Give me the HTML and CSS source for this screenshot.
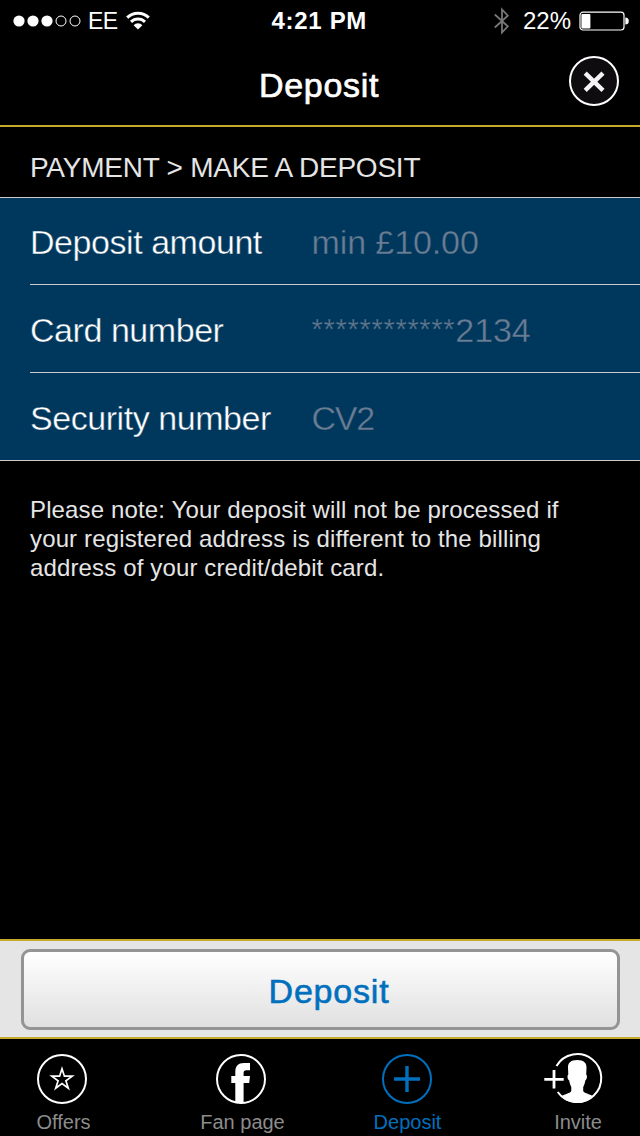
FILE: index.html
```html
<!DOCTYPE html>
<html lang="en">
<head>
  <meta charset="UTF-8">
  <meta name="viewport" content="width=640">
  <title>Deposit</title>
  <link rel="stylesheet" href="styles.css">
</head>
<body>
  <div class="app">
    <div class="status-bar">
      <div class="status-left">
        <svg class="signal" width="68" height="12" viewBox="0 0 68 12">
          <g fill="#fff">
            <circle cx="6" cy="6" r="5.6"/>
            <circle cx="20" cy="6" r="5.6"/>
            <circle cx="34" cy="6" r="5.6"/>
          </g>
          <g fill="none" stroke="#fff" stroke-width="1">
            <circle cx="48" cy="6" r="5"/>
            <circle cx="62" cy="6" r="5"/>
          </g>
        </svg>
        <span class="carrier">EE</span>
        <svg class="wifi" width="24" height="19" viewBox="0 0 24 19">
          <g fill="none" stroke="#fff" stroke-width="3">
            <path d="M1.2 6.6a15.3 15.3 0 0 1 21.6 0"/>
            <path d="M5 10.9a9.9 9.9 0 0 1 14 0"/>
          </g>
          <path d="M12 18.6l-4.4-4.4a6.2 6.2 0 0 1 8.8 0z" fill="#fff"/>
        </svg>
      </div>
      <span class="time">4:21 PM</span>
      <div class="status-right">
        <svg class="bluetooth" width="16" height="28" viewBox="0 0 16 28">
          <path d="M.8 7.5L13.8 19.3 8 25.5V2.5L13.8 8.7.8 20.5" fill="none" stroke="#777" stroke-width="1.8"/>
        </svg>
        <span class="percent">22%</span>
        <svg class="battery" width="50" height="20" viewBox="0 0 50 20">
          <rect x="1" y="1.2" width="44" height="17.8" rx="3" fill="none" stroke="#fff" stroke-width="1.2"/>
          <rect x="2.4" y="3" width="9" height="14.5" rx="1" fill="#fff"/>
          <path d="M46.3 6.5a3.4 3.4 0 0 1 0 7z" fill="#fff"/>
        </svg>
      </div>
    </div>

    <header class="header">
      <h1 class="title">Deposit</h1>
      <button class="close" aria-label="Close">
        <svg width="50" height="50" viewBox="0 0 50 50">
          <circle cx="25" cy="25" r="24" fill="#0e0c0f" stroke="#fff" stroke-width="2"/>
          <path d="M16.2 17.2L34 34.4M34 17.2L16.2 34.4" fill="none" stroke="#f4f4f4" stroke-width="4.4"/>
        </svg>
      </button>
    </header>

    <h2 class="breadcrumb">PAYMENT &gt; MAKE A DEPOSIT</h2>

    <div class="form">
      <div class="row">
        <span class="label">Deposit amount</span>
        <span class="value">min £10.00</span>
      </div>
      <div class="row">
        <span class="label">Card number</span>
        <span class="value"><span class="mask">************</span>2134</span>
      </div>
      <div class="row">
        <span class="label">Security number</span>
        <span class="value cv">CV2</span>
      </div>
    </div>

    <p class="note">Please note: Your deposit will not be processed if<br>your registered address is different to the billing<br>address of your credit/debit card.</p>

    <div class="action-bar">
      <button class="deposit-btn">Deposit</button>
    </div>

    <nav class="tabs">
      <a class="tab">
        <svg width="50" height="50" viewBox="0 0 50 50" fill="none" stroke="#fff">
          <circle cx="25" cy="25" r="24" stroke-width="2"/>
          <path d="M25 14.8l2.4 7.4h7.8l-6.3 4.6 2.4 7.4-6.3-4.6-6.3 4.6 2.4-7.4-6.3-4.6h7.8z" stroke-width="1.7"/>
        </svg>
        <span>Offers</span>
      </a>
      <a class="tab">
        <svg width="50" height="50" viewBox="0 0 50 50">
          <circle cx="25" cy="25" r="24" fill="none" stroke="#fff" stroke-width="2"/>
          <path d="M19.3 48.5V29h-4v-7h4v-4c0-6 3-9 8.5-9H34v7.2h-3.6c-2 0-2.8.9-2.8 2.8v3H34l-.8 7h-5.6v20z" fill="#fff"/>
        </svg>
        <span>Fan page</span>
      </a>
      <a class="tab active">
        <svg width="50" height="50" viewBox="0 0 50 50" fill="none" stroke="#0070be">
          <circle cx="25" cy="25" r="24" stroke-width="2"/>
          <path d="M12 25h26M25 12v26" stroke-width="3.4"/>
        </svg>
        <span>Deposit</span>
      </a>
      <a class="tab invite">
        <svg width="58" height="50" viewBox="0 0 58 50">
          <path d="M12.5 12A24 24 0 1 1 13.7 38" fill="none" stroke="#fff" stroke-width="2"/>
          <path d="M.3 25.3h19.4M10 16v18.6" fill="none" stroke="#fff" stroke-width="2.8"/>
          <path d="M33.2 6C40 6 42.8 9 42.5 14L42.2 20.5C43.6 21.5 43 25.5 41.3 26.5C40.9 29.5 40 31.5 39.2 33V37C40 39.300 45.5 39.8 49.3 42.3C45 47 39.5 49 33.2 49C27 49 21.500 47 17.2 42.3C21 39.8 26.500 39.300 27.3 37V33C26.5 31.5 25.6 29.5 25.2 26.5C23.500 25.5 22.9 21.5 24.3 20.5L24 14C23.7 9 26.5 6 33.2 6Z" fill="#fff"/>
        </svg>
        <span>Invite</span>
      </a>
    </nav>
  </div>
</body>
</html>
```
FILE: styles.css
```css
* {
  box-sizing: border-box;
}
body {
  margin: 0;
  background: #000;
  color: #fff;
  font-family: "Liberation Sans", Arial, sans-serif;
}
svg {
  display: block;
  overflow: visible;
}
button {
  padding: 0;
  font-family: inherit;
  cursor: pointer;
}
.app {
  width: 640px;
  height: 1136px;
  display: flex;
  flex-direction: column;
  overflow: hidden;
}

/* status bar */
.status-bar {
  height: 40px;
  padding: 1px 11px 0 12.5px;
  display: grid;
  grid-template-columns: 1fr auto 1fr;
  align-items: center;
  font-size: 24px;
}
.status-left, .status-right {
  display: flex;
  align-items: center;
}
.status-right {
  justify-content: flex-end;
}
.carrier {
  margin-left: 7.5px;
  padding-top: 1px;
  font-size: 23px;
  letter-spacing: -0.6px;
}
.wifi {
  margin-left: 9px;
}
.time {
  padding-right: 3px;
  font-size: 24px;
  font-weight: bold;
  letter-spacing: 0.7px;
}
.bluetooth {
  margin-right: 13px;
}
.percent {
  margin-right: 8px;
}

/* header */
.header {
  height: 87px;
  padding: 0 21px;
  border-bottom: 2px solid #c9ab2c;
  display: grid;
  grid-template-columns: 1fr auto 1fr;
  align-items: start;
}
.title {
  grid-column: 2;
  margin: 26px 2px 0 0;
  font-size: 34px;
  line-height: 38px;
  font-weight: normal;
  letter-spacing: 0.7px;
  -webkit-text-stroke: 0.7px #fff;
}
.close {
  justify-self: end;
  margin-top: 16px;
  border: none;
  background: none;
}
.breadcrumb {
  height: 70px;
  margin: 0;
  padding: 25px 30px 0;
  color: #e5e5e5;
  font-size: 28px;
  line-height: 32px;
  font-weight: normal;
  letter-spacing: -0.24px;
}

/* form */
.form {
  border-top: 1px solid #ccc;
  border-bottom: 1px solid #ccc;
  background: #00385d;
}
.row {
  height: 88px;
  margin-left: 30px;
  display: flex;
  align-items: center;
  border-bottom: 1px solid #ccc;
  font-size: 34px;
  line-height: 40px;
  padding-top: 3px;
  -webkit-text-stroke: 0.4px #00385d;
}
.row:first-child {
  height: 87px;
  padding-top: 2px;
}
.row:last-child {
  height: 87px;
  border-bottom: none;
}
.label {
  width: 281.5px;
  letter-spacing: -0.45px;
}
.value {
  color: #6a7d93;
  letter-spacing: -0.1px;
}
.cv {
  letter-spacing: -1.2px;
}
.mask {
  font-size: 29px;
  line-height: 1;
  vertical-align: 3px;
  letter-spacing: 0.7px;
}

.note {
  margin: 34px 30px 0;
  color: #e5e5e5;
  font-size: 24px;
  line-height: 29px;
  letter-spacing: 0.14px;
}

/* bottom button */
.action-bar {
  height: 100px;
  margin-top: auto;
  padding: 8px 20px 7px 21px;
  border-top: 2px solid #c9ab2c;
  border-bottom: 2px solid #c9ab2c;
  background: #e5e5e5;
}
.deposit-btn {
  width: 100%;
  height: 81px;
  padding: 4px 0 0 17px;
  border: 3px solid #949494;
  border-radius: 9px;
  background: linear-gradient(#fff, #e0e0e0);
  color: #0070be;
  font-size: 34px;
  letter-spacing: 0.8px;
  -webkit-text-stroke: 0.6px #0070be;
}

/* tab bar */
.tabs {
  height: 97px;
  padding: 15px 38px 0 0;
  display: grid;
  grid-template-columns: 124px 234px 98px 1fr;
}
.tab {
  display: flex;
  flex-direction: column;
  align-items: center;
  color: #8c8c8c;
  font-size: 20px;
}
.tab span {
  margin-top: 6px;
  padding-left: 3px;
  line-height: 24px;
}
.active {
  color: #0070be;
}
.active span {
  padding-left: 1px;
}
.invite {
  align-items: flex-end;
}
```
